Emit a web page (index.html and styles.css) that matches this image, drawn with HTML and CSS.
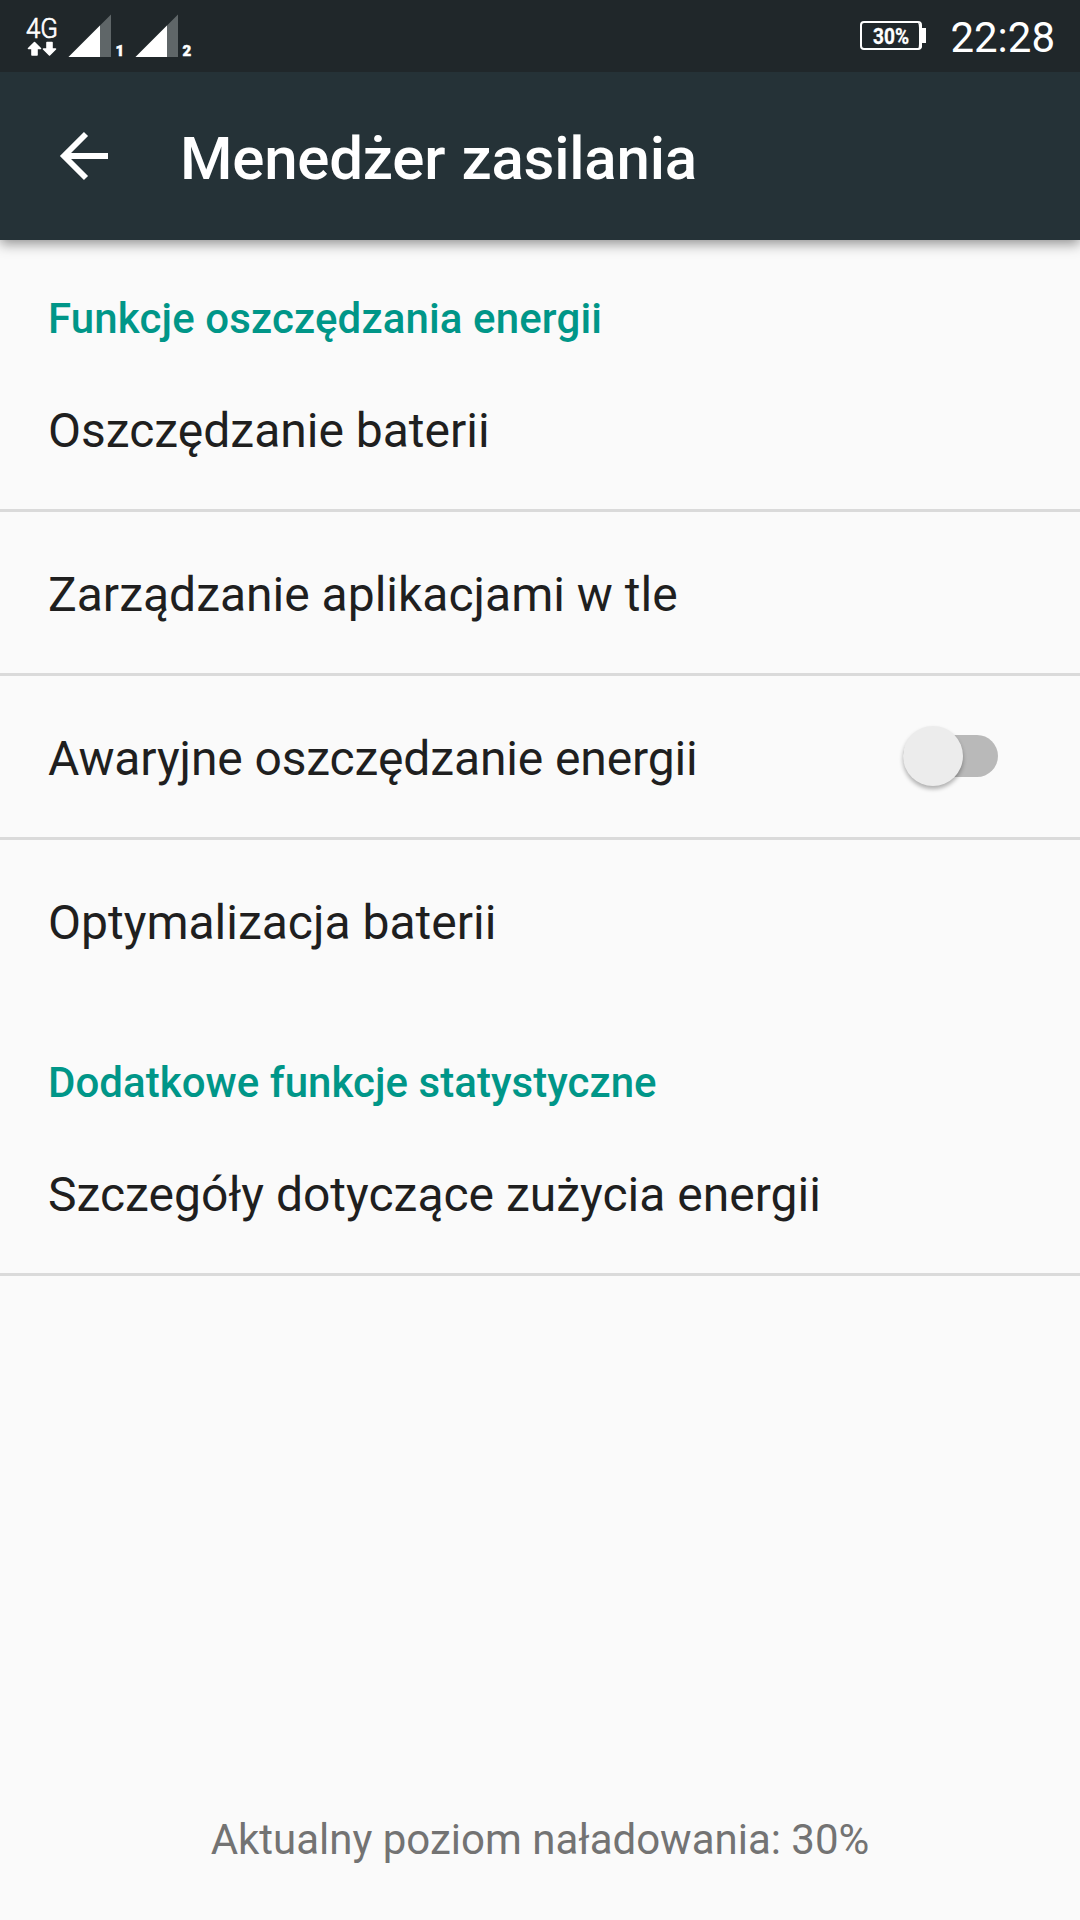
FILE: index.html
```html
<!DOCTYPE html>
<html lang="pl">
<head>
<meta charset="utf-8">
<title>Menedżer zasilania</title>
<link rel="stylesheet" href="styles.css">
</head>
<body>
<div class="status">
  <svg class="signals" width="200" height="72" viewBox="0 0 200 72">
    <text class="net" x="26" y="38" textLength="32" lengthAdjust="spacingAndGlyphs">4G</text>
    <path fill="#fff" stroke="#fff" stroke-width="1.6" stroke-linejoin="round" d="M34.500 42.500l6 6h-3.500v6.500h-5v-6.500h-3.500zM49.500 55l6-6h-3.500v-6.500h-5v6.500h-3.500z"/>
    <path fill="#5f6668" d="M111 14.500V57H68.500z"/><path fill="#fff" d="M100 25.500V57H68.500z"/>
    <text class="sim" x="115.500" y="56">1</text>
    <path fill="#5f6668" d="M178 14.500V57h-42.500z"/><path fill="#fff" d="M167 25.500V57h-31.500z"/>
    <text class="sim" x="182.500" y="56">2</text>
  </svg>
  <svg class="battery" width="68" height="72" viewBox="0 0 68 72">
    <rect x="2" y="22" width="60" height="27" rx="3" fill="none" stroke="#fff" stroke-width="2"/>
    <path d="M59 22l3 3h1v3h4v15h-4v4l-4 3q1-3 1-6V28q0-3-1-6z" fill="#fff"/>
    <text class="level" x="14" y="44" textLength="36" lengthAdjust="spacingAndGlyphs">30%</text>
  </svg>
  <span class="clock">22:28</span>
</div>
<header class="bar">
  <svg class="back" width="50" height="50" viewBox="0 0 50 50"><path d="M27 3L5 25l22 22M5 25h44" fill="none" stroke="#fff" stroke-width="5.8"/></svg>
  <h1 class="title">Menedżer zasilania</h1>
</header>
<main class="list">
  <h2 class="section">Funkcje oszczędzania energii</h2>
  <div class="row"><span>Oszczędzanie baterii</span></div>
  <div class="row"><span>Zarządzanie aplikacjami w tle</span></div>
  <div class="row"><span class="emergency">Awaryjne oszczędzanie energii</span><div class="switch"><div class="thumb"></div></div></div>
  <div class="row plain"><span>Optymalizacja baterii</span></div>
  <h2 class="section second">Dodatkowe funkcje statystyczne</h2>
  <div class="row"><span>Szczegóły dotyczące zużycia energii</span></div>
</main>
<footer class="footer">Aktualny poziom naładowania: 30%</footer>
</body>
</html>
```
FILE: styles.css
```css
* { box-sizing: border-box; }
body { margin: 0; width: 1080px; height: 1920px; background: #fafafa; font-family: Roboto, sans-serif; color: #1f1f1f; display: flex; flex-direction: column; overflow: hidden; }
.status { height: 72px; background: #20272a; color: #fff; display: flex; padding-right: 25px; flex: none; position: relative; z-index: 1; }
.signals { margin-right: auto; }
.net { font-size: 28px; font-weight: 300; fill: #fff; stroke: #fff; stroke-width: .7px; }
.sim { font-size: 15px; font-weight: 900; fill: #fff; stroke: #fff; stroke-width: .5px; }
.level { font-size: 22px; font-weight: 700; fill: #fff; stroke: #fff; stroke-width: .3px; }
.clock { font-size: 42px; line-height: 75px; margin-left: 23px; }
.bar { height: 168px; flex: none; background: #253237; color: #fff; display: flex; align-items: center; padding-left: 59px; box-shadow: 0 4px 12px rgba(0,0,0,.42); }
.title { margin: 4px 0 0 71px; font-size: 60px; font-weight: 500; letter-spacing: -.22px; word-spacing: 1.5px; }
.section { margin: 0; padding: 54px 48px 0; height: 108px; font-size: 42px; line-height: 49px; font-weight: 500; letter-spacing: .13px; color: #009688; }
.second { letter-spacing: .04px; }
.row { height: 164px; padding: 4px 48px 0; display: flex; align-items: center; justify-content: space-between; font-size: 48px; border-bottom: 3px solid #dadada; }
.plain { border-bottom-color: transparent; }
.emergency { letter-spacing: -.12px; }
.switch { width: 95px; height: 42px; border-radius: 21px; background: #b9b9b9; margin: 0 34px 5px 0; }
.thumb { width: 60px; height: 60px; border-radius: 50%; background: #ececec; margin-top: -9px; box-shadow: 0 3px 4px rgba(0,0,0,.3); }
.footer { margin-top: auto; padding-bottom: 55px; text-align: center; font-size: 42px; line-height: 50px; color: #737373; }
```
